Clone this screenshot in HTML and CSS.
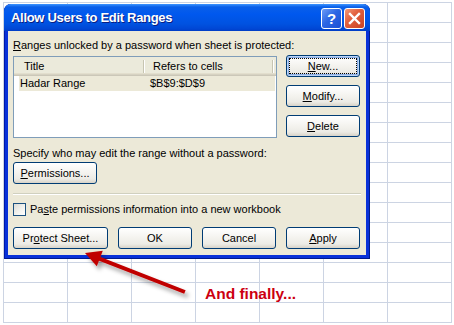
FILE: index.html
```html
<!DOCTYPE html>
<html>
<head>
  <title>Allow Users to Edit Ranges</title>
  <link rel="stylesheet" href="styles.css">
</head>
<body>
  <div class="sheet">
    <div class="dialog">
      <div class="titlebar">
        <span class="title">Allow Users to Edit Ranges</span>
        <div class="caption-btns">
          <span class="cbtn help">?</span>
          <span class="cbtn close">
            <svg width="13" height="13" viewBox="0 0 13 13">
              <path d="M2 2 L11 11 M11 2 L2 11" stroke="#fff" stroke-width="2.4" stroke-linecap="square" />
            </svg>
          </span>
        </div>
      </div>

      <div class="content">
        <p class="label"><u>R</u>anges unlocked by a password when sheet is protected:</p>

        <div class="ranges">
          <div class="listbox">
            <div class="list-head">
              <span class="head-cell col-title">Title</span>
              <span class="head-cell col-ref">Refers to cells</span>
            </div>
            <div class="list-row">
              <span class="cell-title">Hadar Range</span>
              <span class="cell-ref">$B$9:$D$9</span>
            </div>
          </div>
          <div class="side-btns">
            <button class="btn default"><span class="focus"><u>N</u>ew...</span></button>
            <button class="btn"><u>M</u>odify...</button>
            <button class="btn"><u>D</u>elete</button>
          </div>
        </div>

        <p class="label label-who">Specify who may edit the range without a password:</p>
        <button class="btn btn-perm"><u>P</u>ermissions...</button>

        <div class="sep"></div>

        <label class="check">
          <span class="box"></span>
          <span>Pa<u>s</u>te permissions information into a new workbook</span>
        </label>

        <div class="actions">
          <button class="btn btn-protect">Pr<u>o</u>tect Sheet...</button>
          <button class="btn">OK</button>
          <button class="btn">Cancel</button>
          <button class="btn"><u>A</u>pply</button>
        </div>
      </div>
    </div>
  </div>

  <svg class="arrow" width="454" height="325" viewBox="0 0 454 325">
    <defs>
      <filter id="shadow" x="-20%" y="-20%" width="140%" height="160%">
        <feDropShadow dx="3" dy="4" stdDeviation="2" flood-color="#000" flood-opacity="0.35" />
      </filter>
    </defs>
    <g filter="url(#shadow)" fill="#c00000">
      <path d="M185.6 290.2 L98.6 256.3 L97.2 259.9 L184.2 293.8 Z" />
      <path d="M85 253 L102.8 250.8 L96.8 266.2 Z" />
    </g>
  </svg>
  <div class="note">And finally...</div>
</body>
</html>
```

FILE: styles.css
```css
body {
  margin: 0;
  width: 454px;
  height: 325px;
  background: #ffffff;
  font-family: "Liberation Sans", Arial, sans-serif;
  font-size: 11px;
  color: #000;
  position: relative;
  overflow: hidden;
}
.sheet {
  margin: 2px 0 0 3px;
  width: 449px;
  height: 321px;
  box-sizing: border-box;
  padding: 2px 0 0 1px;
  background-image:
    linear-gradient(to right, #ccd4e3 1px, transparent 1px),
    linear-gradient(to bottom, #ccd4e3 1px, transparent 1px);
  background-size: 64px 20px;
}
.dialog {
  width: 366px;
  height: 255px;
  box-sizing: border-box;
  display: flex;
  flex-direction: column;
  padding: 0 4px 4px 4px;
  background: #0831d9;
  border-radius: 7px 7px 0 0;
  box-shadow: inset 1px 0 #0019a8, inset -1px 0 #001a8c, inset 0 -1px #001a8c;
}
.titlebar {
  margin: 0 -4px;
  height: 27px;
  flex: none;
  display: flex;
  align-items: center;
  justify-content: space-between;
  padding: 0 5px 0 7px;
  border-radius: 7px 7px 0 0;
  background: linear-gradient(#3d95ff 0, #0a5fe9 3px, #0058ee 10px, #0052e0 20px, #0046d4 25px, #003cc4 27px);
}
.title {
  color: #fff;
  font-weight: bold;
  font-size: 13px;
  letter-spacing: -0.3px;
  text-shadow: 1px 1px #0a1e80;
}
.caption-btns {
  display: flex;
  gap: 2px;
  margin-top: 1px;
}
.cbtn {
  width: 21px;
  height: 21px;
  box-sizing: border-box;
  border: 1px solid #fff;
  border-radius: 3px;
  display: flex;
  align-items: center;
  justify-content: center;
}
.help {
  color: #fff;
  font-weight: bold;
  font-size: 15px;
  background: linear-gradient(135deg, #6c9cf7 0%, #2c66e4 45%, #1a4fd4 100%);
}
.close {
  background: linear-gradient(135deg, #f29a7a 0%, #e2613f 40%, #c94224 100%);
}
.content {
  flex: 1;
  background: #ece9d8;
  padding: 8px 6px 6px 5px;
  display: flex;
  flex-direction: column;
  align-items: flex-start;
}
.label {
  margin: 0;
  line-height: 13px;
}
.ranges {
  margin-top: 3px;
  display: flex;
  gap: 9px;
  height: 83px;
}
.listbox {
  margin-top: 1px;
  width: 264px;
  height: 82px;
  box-sizing: border-box;
  border: 1px solid #7f9db9;
  background: #fff;
}
.list-head {
  height: 19px;
  box-sizing: border-box;
  display: flex;
  background: linear-gradient(#ebeadb 0, #ebeadb 16px, #e2decd 16px, #e2decd 17px, #d6d2c2 17px, #d6d2c2 18px, #cbc7b8 18px);
}
.head-cell {
  margin-top: 3px;
  height: 13px;
  line-height: 13px;
  box-sizing: border-box;
  border-right: 1px solid #c7c5b2;
  box-shadow: 1px 0 #fff;
}
.col-title {
  width: 130px;
  padding-left: 10px;
}
.col-ref {
  width: 129px;
  padding-left: 9px;
}
.list-row {
  margin: 0 1px 0 5px;
  height: 15px;
  padding-top: 1px;
  box-sizing: border-box;
  line-height: 13px;
  display: flex;
  background: #ece9d8;
}
.cell-title {
  width: 130px;
  padding-left: 1px;
}
.side-btns {
  display: flex;
  flex-direction: column;
  gap: 8px;
}
.btn {
  height: 22px;
  width: 74px;
  box-sizing: border-box;
  border: 1px solid #003c74;
  border-radius: 3px;
  background: linear-gradient(#ffffff 0%, #f5f4f0 45%, #ecebe5 80%, #d8d3c8 100%);
  font: inherit;
  color: #000;
  padding: 0;
  display: flex;
  align-items: center;
  justify-content: center;
}
.default {
  box-shadow: inset 0 0 0 1px #bcd4f6, inset 0 0 0 2px #89ade4;
  padding: 2px;
}
.focus {
  flex: 1;
  align-self: stretch;
  display: flex;
  align-items: center;
  justify-content: center;
  border: 1px dotted #000;
}
.label-who {
  margin-top: 9px;
}
.btn-perm {
  margin-top: 2px;
  width: 84px;
}
.sep {
  margin-top: 9px;
  width: 348px;
  height: 1px;
  background: #d0d0bf;
  border-bottom: 1px solid #fff;
}
.check {
  margin-top: 8px;
  display: flex;
  align-items: center;
  gap: 4px;
  line-height: 13px;
}
.box {
  width: 13px;
  height: 13px;
  box-sizing: border-box;
  border: 1px solid #1c5180;
  background: linear-gradient(135deg, #dcdcd7 0%, #f4f4f0 60%, #ffffff 100%);
}
.actions {
  margin-top: 11px;
  display: flex;
  gap: 10px;
}
.btn-protect {
  width: 95px;
}
.arrow {
  position: absolute;
  left: 0;
  top: 0;
  pointer-events: none;
}
.note {
  position: absolute;
  left: 205px;
  top: 286px;
  font-weight: bold;
  font-size: 15.5px;
  line-height: 16px;
  color: #cc0010;
}
```
